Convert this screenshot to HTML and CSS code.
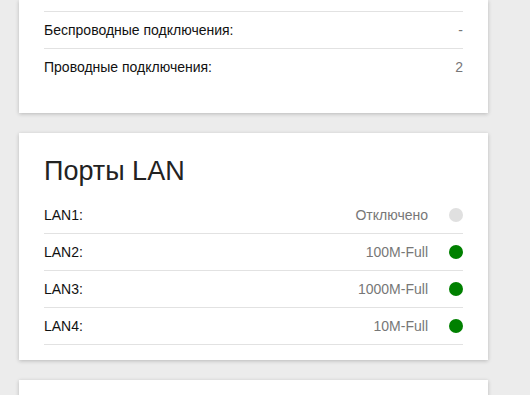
FILE: index.html
```html
<!DOCTYPE html>
<html lang="ru">
<head>
    <meta charset="UTF-8">
    <title>Состояние устройства</title>
    <link rel="stylesheet" href="styles.css">
</head>
<body>
<div class="page">
    <div class="card card_cut">
        <div class="card__row card__row_first">
            <span class="card__label">Беспроводные подключения:</span>
            <span class="card__value">-</span>
        </div>
        <div class="card__row card__row_last">
            <span class="card__label">Проводные подключения:</span>
            <span class="card__value">2</span>
        </div>
    </div>

    <div class="card card_ports">
        <h2 class="card__title">Порты LAN</h2>
        <div class="card__row">
            <span class="card__label">LAN1:</span>
            <span class="card__value">Отключено</span>
            <span class="status status_off"></span>
        </div>
        <div class="card__row">
            <span class="card__label">LAN2:</span>
            <span class="card__value">100M-Full</span>
            <span class="status status_on"></span>
        </div>
        <div class="card__row">
            <span class="card__label">LAN3:</span>
            <span class="card__value">1000M-Full</span>
            <span class="status status_on"></span>
        </div>
        <div class="card__row">
            <span class="card__label">LAN4:</span>
            <span class="card__value">10M-Full</span>
            <span class="status status_on"></span>
        </div>
    </div>

    <div class="card card_next"></div>
</div>
</body>
</html>
```
FILE: styles.css
```css
* {
    box-sizing: border-box;
    font-family: "Segoe UI", "Liberation Sans", Arial, sans-serif;
}
html,
body {
    height: 100%;
    margin: 0;
    overflow: hidden;
    background-color: #ececec;
}
.page {
    width: 469px;
    margin-left: 19px;
}
.card {
    margin-bottom: 20px;
    padding: 0 25px;
    background-color: #fff;
    box-shadow: 0 1px 4px rgba(0, 0, 0, 0.22);
}
.card_cut {
    padding-top: 11px;
    padding-bottom: 28px;
}
.card_ports {
    padding-top: 20px;
    padding-bottom: 15px;
}
.card_next {
    height: 60px;
}
.card__title {
    margin: 0 0 8px;
    color: #222;
    font-size: 27px;
    font-weight: normal;
    line-height: 36px;
}
.card__row {
    display: flex;
    align-items: center;
    height: 37px;
    font-size: 14px;
    border-bottom: 1px solid #e2e2e2;
}
.card__row_first {
    height: 38px;
    border-top: 1px solid #e2e2e2;
}
.card__row_last {
    height: 36px;
    border-bottom: 0;
}
.card__label {
    flex: 1;
    color: #111;
}
.card__value {
    color: #777;
}
.status {
    width: 14px;
    height: 14px;
    margin-left: 21px;
    border-radius: 50%;
}
.status_on {
    background-color: #008000;
}
.status_off {
    background-color: #e0e0e0;
}
```
